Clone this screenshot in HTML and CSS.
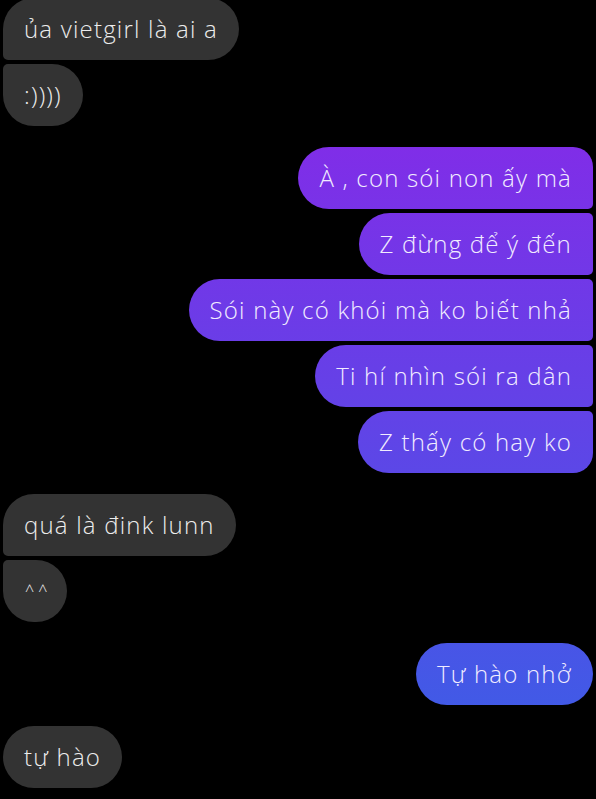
FILE: index.html
```html
<!DOCTYPE html>
<html lang="vi">
<head>
<meta charset="utf-8">
<title>Chat</title>
<link rel="stylesheet" href="styles.css">
</head>
<body>
<div class="chat">
  <div class="group in">
    <div class="bubble first">ủa vietgirl là ai a</div>
    <div class="bubble last">:))))</div>
  </div>
  <div class="group out">
    <div class="bubble first">À , con sói non ấy mà</div>
    <div class="bubble mid">Z đừng để ý đến</div>
    <div class="bubble mid">Sói này có khói mà ko biết nhả</div>
    <div class="bubble mid">Ti hí nhìn sói ra dân</div>
    <div class="bubble last">Z thấy có hay ko</div>
  </div>
  <div class="group in">
    <div class="bubble first">quá là đink lunn</div>
    <div class="bubble last small">^ ^</div>
  </div>
  <div class="group out">
    <div class="bubble single">Tự hào nhở</div>
  </div>
  <div class="group in">
    <div class="bubble single">tự hào</div>
  </div>
</div>
</body>
</html>
```

FILE: styles.css
```css
html, body {
  margin: 0;
  padding: 0;
  background: #000;
}

body {
  font-family: "Open Sans", "Noto Sans", sans-serif;
  width: 596px;
  height: 799px;
  overflow: hidden;
}

.chat {
  display: flex;
  flex-direction: column;
  gap: 21px;
  padding: 0 3px;
  margin-top: -2px;
}

.group {
  display: flex;
  flex-direction: column;
  gap: 4px;
}

.group.in {
  align-items: flex-start;
}

.group.out {
  align-items: flex-end;
}

.bubble {
  box-sizing: border-box;
  height: 62px;
  padding: 0 21px;
  display: flex;
  align-items: center;
  font-size: 24px;
  font-weight: 300;
  letter-spacing: 1.2px;
  line-height: 30px;
  white-space: nowrap;
  color: #ececec;
  border-radius: 31px;
}

.bubble.small {
  font-size: 16px;
  letter-spacing: 0;
  padding: 0 20px 0 22px;
}

.in .bubble {
  background: #333333;
}

.out .bubble {
  color: #f1ecff;
  background: linear-gradient(to bottom, #9022e8 0%, #3761e6 100%);
  background-attachment: fixed;
}

.in .first { border-bottom-left-radius: 5px; }
.in .mid { border-top-left-radius: 5px; border-bottom-left-radius: 5px; }
.in .last { border-top-left-radius: 5px; }

.out .first { border-top-right-radius: 20px; border-bottom-right-radius: 5px; }
.out .mid { border-top-right-radius: 5px; border-bottom-right-radius: 5px; }
.out .last { border-top-right-radius: 5px; border-bottom-right-radius: 20px; }
```
